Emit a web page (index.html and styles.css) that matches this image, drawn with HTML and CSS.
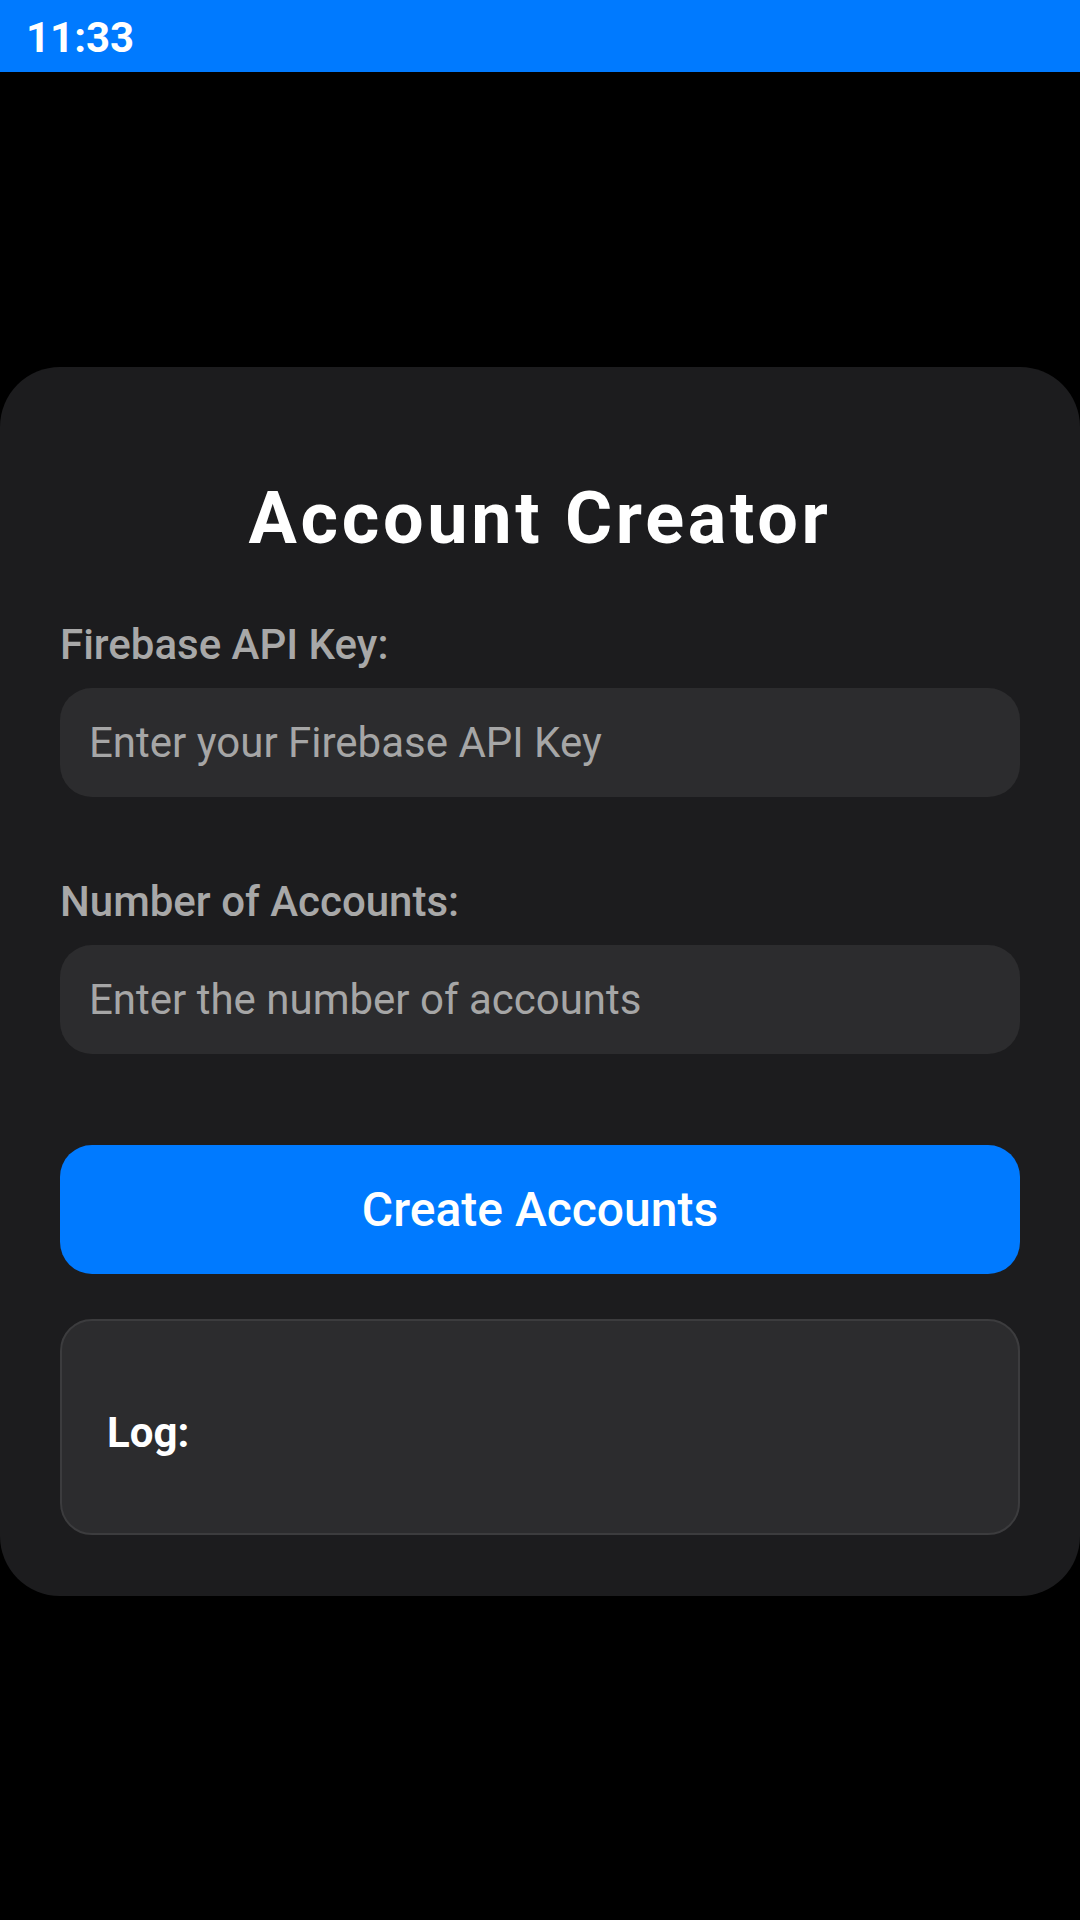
FILE: index.html
```html
<!DOCTYPE html>
<html lang="en">
<head>
<meta charset="utf-8">
<title>Account Creator</title>
<link rel="stylesheet" href="styles.css">
</head>
<body>
<div class="status-bar"><span class="time">11:33</span></div>
<main class="card">
  <h1 class="title">Account Creator</h1>
  <label class="field-label" for="apiKey">Firebase API Key:</label>
  <input class="field-input" id="apiKey" type="text" placeholder="Enter your Firebase API Key">
  <label class="field-label second" for="count">Number of Accounts:</label>
  <input class="field-input" id="count" type="text" placeholder="Enter the number of accounts">
  <button class="create-btn" type="button">Create Accounts</button>
  <section class="log-box">
    <h3 class="log-title">Log:</h3>
  </section>
</main>
</body>
</html>
```

FILE: styles.css
```css
* { box-sizing: border-box; }
html, body {
  margin: 0;
  padding: 0;
  background: #000000;
  font-family: Roboto, "Noto Sans", "Liberation Sans", sans-serif;
  width: 1080px;
  height: 1920px;
}
.status-bar {
  height: 72px;
  background: #007aff;
  padding: 13px 0 0 26px;
}
.time {
  display: block;
  color: #ffffff;
  font-size: 42px;
  font-weight: 700;
  line-height: normal;
}
.card {
  margin-top: 295px;
  background: #1c1c1e;
  border-radius: 60px;
  padding: 109px 60px 61px 60px;
  display: flex;
  flex-direction: column;
}
.title {
  margin: 0;
  text-align: center;
  color: #ffffff;
  font-size: 72px;
  font-weight: 700;
  letter-spacing: 3.7px;
  line-height: normal;
}
.field-label {
  display: block;
  margin-top: 59px;
  color: #a8a8a8;
  font-size: 42px;
  font-weight: 500;
  line-height: normal;
}
.field-label.second {
  margin-top: 80px;
}
.field-input {
  margin-top: 19px;
  height: 109px;
  width: 100%;
  border: none;
  outline: none;
  border-radius: 32px;
  background: #2c2c2e;
  padding: 0 29px;
  font-family: inherit;
  font-size: 42px;
  color: #ffffff;
}
.field-input::placeholder {
  color: #a6a6a6;
}
.create-btn {
  margin-top: 91px;
  height: 129px;
  width: 100%;
  border: none;
  border-radius: 32px;
  background: #007aff;
  color: #ffffff;
  font-family: inherit;
  font-size: 48px;
  font-weight: 500;
}
.log-box {
  margin-top: 45px;
  border: 2px solid #3c3c3e;
  border-radius: 32px;
  background: #2c2c2e;
  padding: 87px 45px 76px 45px;
}
.log-title {
  margin: 0;
  color: #ffffff;
  font-size: 42px;
  font-weight: 700;
  line-height: normal;
}
```
